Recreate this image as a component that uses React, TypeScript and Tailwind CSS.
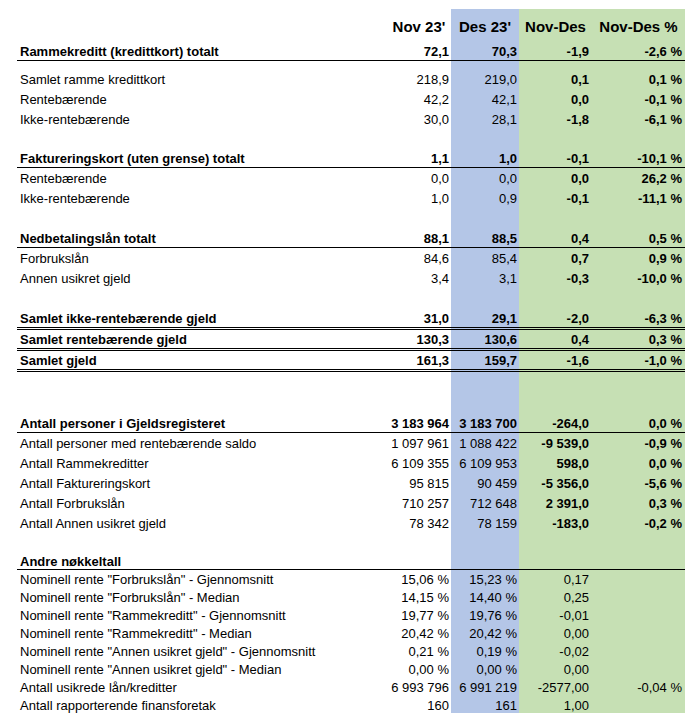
import React from "react";

type R = {
  l?: string;
  v?: [string, string, string, string];
  h: string;
  b?: "single" | "double";
  bl?: boolean;
  bv?: boolean;
  bd?: boolean;
};

const rows: R[] = [
  { l: "Rammekreditt (kredittkort) totalt", v: ["72,1", "70,3", "-1,9", "-2,6 %"], h: "h-[20px]", b: "single", bl: true, bv: true, bd: true },
  { h: "h-[8px]" },
  { l: "Samlet ramme kredittkort", v: ["218,9", "219,0", "0,1", "0,1 %"], h: "h-[20px]", bd: true },
  { l: "Rentebærende", v: ["42,2", "42,1", "0,0", "-0,1 %"], h: "h-[20px]", bd: true },
  { l: "Ikke-rentebærende", v: ["30,0", "28,1", "-1,8", "-6,1 %"], h: "h-[20px]", bd: true },
  { h: "h-[19px]" },
  { l: "Faktureringskort (uten grense) totalt", v: ["1,1", "1,0", "-0,1", "-10,1 %"], h: "h-[20px]", b: "single", bl: true, bv: true, bd: true },
  { l: "Rentebærende", v: ["0,0", "0,0", "0,0", "26,2 %"], h: "h-[20px]", bd: true },
  { l: "Ikke-rentebærende", v: ["1,0", "0,9", "-0,1", "-11,1 %"], h: "h-[20px]", bd: true },
  { h: "h-[20px]" },
  { l: "Nedbetalingslån totalt", v: ["88,1", "88,5", "0,4", "0,5 %"], h: "h-[20px]", b: "single", bl: true, bv: true, bd: true },
  { l: "Forbrukslån", v: ["84,6", "85,4", "0,7", "0,9 %"], h: "h-[20px]", bd: true },
  { l: "Annen usikret gjeld", v: ["3,4", "3,1", "-0,3", "-10,0 %"], h: "h-[20px]", bd: true },
  { h: "h-[21px]" },
  { l: "Samlet ikke-rentebærende gjeld", v: ["31,0", "29,1", "-2,0", "-6,3 %"], h: "h-[21px]", b: "double", bl: true, bv: true, bd: true },
  { l: "Samlet rentebærende gjeld", v: ["130,3", "130,6", "0,4", "0,3 %"], h: "h-[21px]", b: "double", bl: true, bv: true, bd: true },
  { l: "Samlet gjeld", v: ["161,3", "159,7", "-1,6", "-1,0 %"], h: "h-[21px]", b: "double", bl: true, bv: true, bd: true },
  { h: "h-[20px]" },
  { h: "h-[21px]" },
  { l: "Antall personer i Gjeldsregisteret", v: ["3 183 964", "3 183 700", "-264,0", "0,0 %"], h: "h-[20px]", b: "single", bl: true, bv: true, bd: true },
  { l: "Antall personer med rentebærende saldo", v: ["1 097 961", "1 088 422", "-9 539,0", "-0,9 %"], h: "h-[20px]", bd: true },
  { l: "Antall Rammekreditter", v: ["6 109 355", "6 109 953", "598,0", "0,0 %"], h: "h-[20px]", bd: true },
  { l: "Antall Faktureringskort", v: ["95 815", "90 459", "-5 356,0", "-5,6 %"], h: "h-[20px]", bd: true },
  { l: "Antall Forbrukslån", v: ["710 257", "712 648", "2 391,0", "0,3 %"], h: "h-[20px]", bd: true },
  { l: "Antall Annen usikret gjeld", v: ["78 342", "78 159", "-183,0", "-0,2 %"], h: "h-[20px]", bd: true },
  { h: "h-[19px]" },
  { l: "Andre nøkkeltall", h: "h-[18px]", b: "single", bl: true },
  { l: 'Nominell rente "Forbrukslån" - Gjennomsnitt', v: ["15,06 %", "15,23 %", "0,17", ""], h: "h-[18px]" },
  { l: 'Nominell rente "Forbrukslån" - Median', v: ["14,15 %", "14,40 %", "0,25", ""], h: "h-[18px]" },
  { l: 'Nominell rente "Rammekreditt" - Gjennomsnitt', v: ["19,77 %", "19,76 %", "-0,01", ""], h: "h-[18px]" },
  { l: 'Nominell rente "Rammekreditt" - Median', v: ["20,42 %", "20,42 %", "0,00", ""], h: "h-[18px]" },
  { l: 'Nominell rente "Annen usikret gjeld" - Gjennomsnitt', v: ["0,21 %", "0,19 %", "-0,02", ""], h: "h-[18px]" },
  { l: 'Nominell rente "Annen usikret gjeld" - Median', v: ["0,00 %", "0,00 %", "0,00", ""], h: "h-[18px]" },
  { l: "Antall usikrede lån/kreditter", v: ["6 993 796", "6 991 219", "-2577,00", "-0,04 %"], h: "h-[18px]" },
  { l: "Antall rapporterende finansforetak", v: ["160", "161", "1,00", ""], h: "h-[17px]" },
];

function border(b?: "single" | "double") {
  if (b === "single") return "border-b border-black";
  if (b === "double") return "border-b-[3px] border-double border-black";
  return "";
}

function Row({ r }: { r: R }) {
  const br = border(r.b);
  const v = r.v ?? ["", "", "", ""];
  return (
    <div className={`grid grid-cols-[370px_64px_68px_73px_93px] ${r.h}`}>
      <div className={`flex items-center pl-[3px] pt-[1px] whitespace-nowrap ${br} ${r.bl ? "font-bold" : ""}`}>{r.l}</div>
      <div className={`flex items-center justify-end pr-[2px] pt-[1px] whitespace-nowrap ${br} ${r.bv ? "font-bold" : ""}`}>{v[0]}</div>
      <div className={`flex items-center justify-end pr-[2px] pt-[1px] whitespace-nowrap bg-[#b4c6e7] ${br} ${r.bv ? "font-bold" : ""}`}>{v[1]}</div>
      <div className={`flex items-center justify-end pr-[3px] pt-[1px] whitespace-nowrap bg-[#c6e0b4] ${br} ${r.bd ? "font-bold" : ""}`}>{v[2]}</div>
      <div className={`flex items-center justify-end pr-[3px] pt-[1px] whitespace-nowrap bg-[#c6e0b4] ${br} ${r.bd ? "font-bold" : ""}`}>{v[3]}</div>
    </div>
  );
}

export default function App() {
  return (
    <div className="w-[693px] h-[721px] bg-white text-black font-['Liberation_Sans',Arial,sans-serif] text-[13px] leading-none pt-[9px] pl-[17px]">
      <div className="grid grid-cols-[370px_64px_68px_73px_93px] h-[32px] text-[15px] font-bold">
        <div />
        <div className="flex items-center justify-center pt-[2px] whitespace-nowrap">Nov 23'</div>
        <div className="flex items-center justify-center pt-[2px] whitespace-nowrap bg-[#b4c6e7]">Des 23'</div>
        <div className="flex items-center justify-center pt-[2px] whitespace-nowrap bg-[#c6e0b4]">Nov-Des</div>
        <div className="flex items-center justify-center pt-[2px] whitespace-nowrap bg-[#c6e0b4]">Nov-Des %</div>
      </div>
      {rows.map((r, i) => (
        <Row key={i} r={r} />
      ))}
    </div>
  );
}
